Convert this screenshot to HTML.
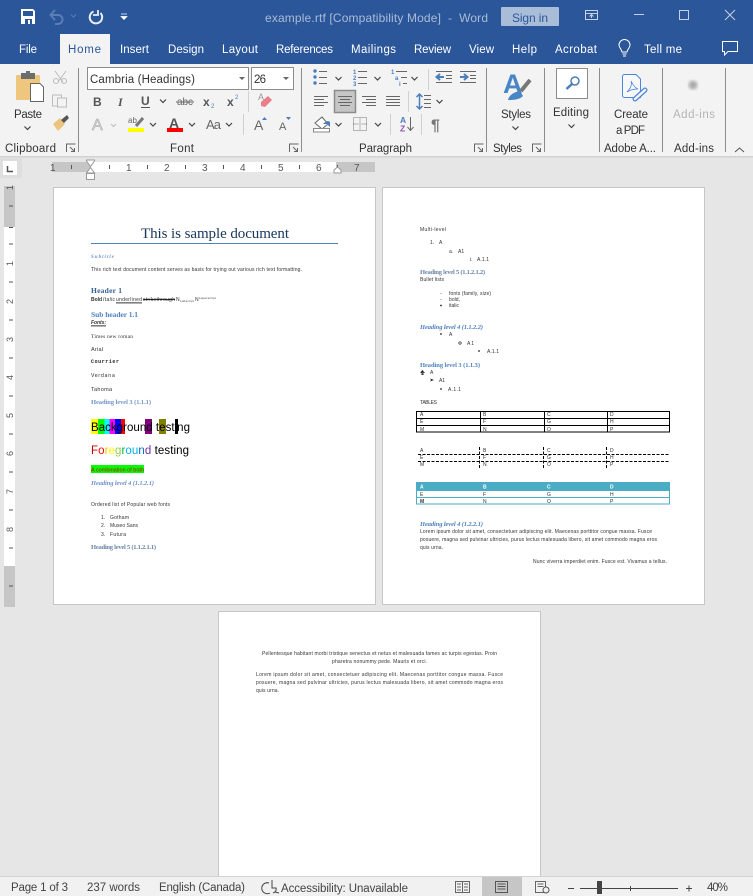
<!DOCTYPE html>
<html lang="en"><head><meta charset="utf-8"><title>example.rtf - Word</title>
<style>
html,body{margin:0;padding:0;width:753px;height:896px;overflow:hidden;background:#e6e6e6}
svg{display:block}
text{font-family:"Liberation Sans",sans-serif;white-space:pre}
.r{font-size:11.5px;fill:#333}
.w{font-size:11.5px;fill:#fff}
.d{font-size:5px;fill:#333}
.h{font-family:"Liberation Serif",serif !important;font-weight:bold;font-size:6.5px;fill:#4f81bd}
.n{font-size:10px;fill:#555}
.s{font-size:11.5px;fill:#444}
.ln{stroke:#666;stroke-width:1;fill:none}
.b{stroke:#4a7ebb;stroke-width:1;fill:none}
</style></head><body>
<svg width="753" height="896" viewBox="0 0 753 896" xmlns="http://www.w3.org/2000/svg">
<defs><filter id="bl"><feGaussianBlur stdDeviation="1.5"/></filter>
<g id="chev"><path d="M-3 -1.5L0 1.5L3 -1.5" fill="none" stroke="#444" stroke-width="1.200"/></g>
<g id="launch"><path d="M-4.5 4V-4H4.5M-1 -1L3.5 3.5M3.5 0V3.5H0" fill="none" stroke="#666" stroke-width="1"/></g>
</defs>
<!-- Title bar and tabs -->
<rect width="753" height="64" fill="#2b579a"/>
<path d="M21 9H33L35 11V24H21Z" fill="#fff"/><rect x="23" y="11" width="10" height="5" fill="#2b579a"/><rect x="25" y="19" width="7" height="5" fill="#2b579a"/><rect x="28" y="20" width="2" height="4" fill="#fff"/>
<path d="M55 10L50.500 15L55 20M51 15H58A4.500 4.500 0 0 1 58 24H55" fill="none" stroke="#5b7eb3" stroke-width="2"/>
<path d="M71 14.500l2.500 2.500 2.500-2.500" fill="none" stroke="#5b7eb3"/>
<path d="M93.500 11.500A6.200 6.200 0 1 0 100.500 13" fill="none" stroke="#e9eef6" stroke-width="2"/><path d="M98 10V15H93" fill="none" stroke="#e9eef6" stroke-width="1.800"/>
<path d="M121 14h6M121 16.500h6l-3 3z" fill="#fff" stroke="#fff" stroke-width=".7"/>
<text x="265" y="22" font-size="12" fill="#a9bbd6" textLength="223">example.rtf [Compatibility Mode]  -  Word</text>
<rect x="501" y="7" width="58" height="19" rx="1" fill="#aabdd8"/>
<text x="512" y="22" font-size="12" fill="#2b579a" textLength="36">Sign in</text>
<g fill="none" stroke="#c4d0e3"><rect x="585.500" y="10.500" width="12" height="9"/><path d="M585.500 13.500H597.500M591.500 18V15M589.500 16.500L591.500 14.500L593.500 16.500"/>
<path d="M634 14.500H644"/><rect x="679.500" y="10.500" width="9" height="9"/><path d="M725 10L735 20M735 10L725 20"/></g>
<text class="w" x="19" y="53" textLength="18">File</text>
<rect x="60" y="34" width="50" height="30" fill="#f3f3f3"/>
<text x="68" y="53" font-size="11.5" fill="#2b579a" textLength="33">Home</text>
<text class="w" x="120" y="53" textLength="29">Insert</text>
<text class="w" x="168" y="53" textLength="36">Design</text>
<text class="w" x="222" y="53" textLength="36">Layout</text>
<text class="w" x="276" y="53" textLength="57">References</text>
<text class="w" x="351" y="53" textLength="45">Mailings</text>
<text class="w" x="414" y="53" textLength="37">Review</text>
<text class="w" x="469" y="53" textLength="25">View</text>
<text class="w" x="512" y="53" textLength="25">Help</text>
<text class="w" x="555" y="53" textLength="42">Acrobat</text>
<path d="M622 52C621 48 619 48 619 45A5.500 5.500 0 0 1 630 45C630 48 628 48 627 52ZM622.500 54H626.500M623 56H626" fill="none" stroke="#fff"/>
<text class="w" x="644" y="53" textLength="38">Tell me</text>
<path d="M722.500 41.500H737.500V51.500H728L724.500 55V51.500H722.500Z" fill="none" stroke="#fff"/>
<!-- Ribbon -->
<rect y="64" width="753" height="92" fill="#f3f3f3"/>
<rect y="156" width="753" height="1.500" fill="#d2d2d2"/>
<g fill="#8c8c8c"><rect x="78" y="68" width="1" height="84"/><rect x="301" y="68" width="1" height="84"/><rect x="486" y="68" width="1" height="84"/><rect x="544" y="68" width="1" height="84"/><rect x="599" y="68" width="1" height="84"/><rect x="662" y="68" width="1" height="84"/><rect x="725" y="68" width="1" height="84"/></g>
<!-- Clipboard -->
<rect x="16" y="75" width="24" height="25" rx="1" fill="#eec67d"/><rect x="21" y="73" width="14" height="6" fill="#6d6d6d"/><rect x="26" y="71" width="4" height="4" fill="#6d6d6d"/>
<path d="M30.500 83.500H40L43.500 87V101.500H30.500Z" fill="#fff" stroke="#666"/>
<text class="r" x="14" y="118" textLength="28">Paste</text><use href="#chev" x="27.500" y="128"/>
<path d="M55 71L63 82M66 71L58 82" stroke="#bbb" fill="none"/><circle cx="56" cy="81" r="2.500" fill="none" stroke="#bbb"/><circle cx="64" cy="81" r="2.500" fill="none" stroke="#bbb"/>
<rect x="52.500" y="95" width="9" height="11" fill="none" stroke="#bbb"/><rect x="57.500" y="98" width="9" height="9" fill="#f3f3f3" stroke="#bbb"/>
<path d="M53 124L60 118L65 124L58 131Z" fill="#ecc47c"/><path d="M61 120L67 115L69 118L64 123Z" fill="#555"/>
<text class="r" x="5" y="152" textLength="51">Clipboard</text><use href="#launch" x="71" y="148"/>
<!-- Font -->
<rect x="87.500" y="67.500" width="161" height="22" fill="#fff" stroke="#8c8c8c"/><rect x="251.500" y="67.500" width="42" height="22" fill="#fff" stroke="#8c8c8c"/>
<text class="r" x="90" y="83" textLength="105">Cambria (Headings)</text><text class="r" x="254" y="83" textLength="12">26</text>
<path d="M239 77h6l-3 3zM283 77h6l-3 3z" fill="#666"/>
<text x="93" y="106" font-size="12" font-weight="bold" fill="#555">B</text>
<text x="118" y="106" font-size="12" font-style="italic" font-weight="bold" fill="#555" style="font-family:'Liberation Serif',serif">I</text>
<text x="141" y="105" font-size="12" font-weight="bold" fill="#555">U</text><rect x="141" y="107" width="9" height="1" fill="#555"/>
<use href="#chev" x="163" y="101"/>
<text x="177" y="105" font-size="10" fill="#666" textLength="16">abc</text><rect x="176" y="101.500" width="18" height="1" fill="#666"/>
<text x="203" y="106" font-size="12" font-weight="bold" fill="#555">x</text><text x="211" y="108" font-size="6" fill="#4a7ebb">2</text>
<text x="227" y="106" font-size="12" font-weight="bold" fill="#555">x</text><text x="235" y="99" font-size="6" fill="#4a7ebb">2</text>
<rect x="248" y="91" width="1" height="21" fill="#d0d0d0"/>
<path d="M261 102L268 96L272 100L265 107L261 106Z" fill="#e8808a"/><text x="258" y="100" font-size="9" fill="#999">A</text>
<text x="92" y="130" font-size="16" fill="#ddd" stroke="#aaa" stroke-width=".6" textLength="14">A</text><path d="M111 124l2.500 2.500 2.500-2.500" fill="none" stroke="#bbb"/>
<text x="128" y="123" font-size="8" fill="#666">ab</text><path d="M136 126L143 118" stroke="#777" stroke-width="3"/><rect x="128" y="128" width="16" height="4" fill="#ff0"/>
<use href="#chev" x="153" y="124.500"/>
<text x="169" y="128" font-size="14" font-weight="bold" fill="#555">A</text><rect x="167" y="128" width="16" height="4" fill="#f00"/>
<use href="#chev" x="192" y="124.500"/>
<text x="206" y="129" font-size="13" fill="#666" textLength="15">Aa</text><use href="#chev" x="229" y="124.500"/>
<rect x="243" y="114" width="1" height="21" fill="#d0d0d0"/>
<text x="254" y="130" font-size="14" fill="#666">A</text><path d="M262 120h5l-2.500-3z" fill="#4a7ebb"/>
<text x="279" y="130" font-size="11" fill="#666">A</text><path d="M286 117h5l-2.500 3z" fill="#4a7ebb"/>
<text class="r" x="170" y="152" textLength="24">Font</text><use href="#launch" x="294" y="148"/>
<!-- Paragraph -->
<g fill="#4a7ebb"><circle cx="315" cy="71" r="1.700"/><circle cx="315" cy="77" r="1.700"/><circle cx="315" cy="83" r="1.700"/></g>
<path class="ln" d="M319 71.500H327M319 77.500H327M319 83.500H327"/><use href="#chev" x="338.500" y="78.500"/>
<g font-weight="bold"><text x="353" y="74" font-size="6" fill="#4a7ebb">1</text><text x="353" y="80" font-size="6" fill="#4a7ebb">2</text><text x="353" y="86" font-size="6" fill="#4a7ebb">3</text></g>
<path class="ln" d="M358 71.500H367M358 77.500H367M358 83.500H367"/><use href="#chev" x="377.500" y="78.500"/>
<g font-weight="bold"><text x="391" y="74" font-size="6" fill="#4a7ebb">1</text><text x="395" y="80" font-size="6" fill="#4a7ebb">a</text><text x="399" y="86" font-size="6" fill="#4a7ebb">i</text></g>
<path class="ln" d="M396 71.500H407M401 77.500H407M403 83.500H407"/><use href="#chev" x="414.500" y="78.500"/>
<rect x="428" y="69" width="1" height="21" fill="#d0d0d0"/>
<path class="ln" d="M436 71.500H452M446 75.500H452M446 78.500H452M436 82.500H452"/><path d="M436 77H444M440 74L436.500 77L440 80" stroke="#4a7ebb" stroke-width="2" fill="none"/>
<path class="ln" d="M460 71.500H476M470 75.500H476M470 78.500H476M460 82.500H476"/><path d="M460 77H467M464 74L467.500 77L464 80" stroke="#4a7ebb" stroke-width="2" fill="none"/>
<path class="ln" d="M314 96.500H328M314 99.500H324M314 102.500H328M314 105.500H324"/>
<rect x="334.500" y="90.500" width="21" height="22" fill="#c6c6c6" stroke="#8c8c8c" stroke-width="1.500"/>
<path class="ln" d="M338 96.500H352M340 99.500H350M338 102.500H352M340 105.500H350"/>
<path class="ln" d="M362 96.500H376M366 99.500H376M362 102.500H376M366 105.500H376"/>
<path class="ln" d="M386 96.500H400M386 99.500H400M386 102.500H400M386 105.500H400"/>
<rect x="408" y="91" width="1" height="21" fill="#d0d0d0"/>
<path class="ln" d="M424 95.500H431M424 99.500H431M424 103.500H431M424 107.500H431"/><path d="M419.500 94V109M416.500 97L419.500 94L422.500 97M416.500 106L419.500 109L422.500 106" stroke="#4a7ebb" stroke-width="1.500" fill="none"/><use href="#chev" x="439.500" y="101.500"/>
<path d="M315 123L322 117L328 124L322 129Z" fill="#fff" stroke="#666"/><path d="M323 124C327 120 329 121 330 122V127L327 124Z" fill="#4a7ebb"/><rect x="313.500" y="128.500" width="16" height="3.500" fill="#fff" stroke="#888"/><use href="#chev" x="338.500" y="124.500"/>
<rect x="353.500" y="117.500" width="13" height="13" fill="none" stroke="#777" stroke-dasharray="1 1"/><path d="M353.500 124H366.500M360 117.500V130.500" stroke="#777" stroke-dasharray="1 1"/><use href="#chev" x="378" y="124.500"/>
<rect x="390" y="114" width="1" height="21" fill="#d0d0d0"/>
<text x="400" y="123" font-size="8.500" font-weight="bold" fill="#4a7ebb">A</text><text x="400" y="131.500" font-size="8.500" font-weight="bold" fill="#8e4fb5">Z</text><path d="M410.500 117V130M407.500 127L410.500 130.500L413.500 127" class="ln"/>
<rect x="421" y="114" width="1" height="21" fill="#d0d0d0"/>
<text x="431" y="130.500" font-size="16" font-weight="bold" fill="#777">¶</text>
<text class="r" x="359" y="152" textLength="53">Paragraph</text><use href="#launch" x="479" y="148"/>
<!-- Styles -->
<text x="503" y="93" font-size="27" font-weight="bold" fill="#4a86c5" textLength="19">A</text>
<path d="M521 91L530 80" stroke="#777" stroke-width="4"/><path d="M508 100C509 95 514 92 520 91L523 96C519 100 513 100 508 100Z" fill="#4a86c5"/>
<text class="r" x="501" y="118" textLength="30">Styles</text><use href="#chev" x="515.500" y="128"/>
<text class="r" x="493" y="152" textLength="29">Styles</text><use href="#launch" x="537" y="148"/>
<!-- Editing -->
<rect x="556.500" y="68.500" width="31" height="30" fill="#fff" stroke="#8c8c8c"/>
<circle cx="575" cy="81" r="4" fill="none" stroke="#4a7ebb" stroke-width="1.500"/><path d="M572 84L566.500 89" stroke="#4a7ebb" stroke-width="2.500"/>
<text class="r" x="553" y="116" textLength="36">Editing</text><use href="#chev" x="571.500" y="126"/>
<!-- PDF -->
<path d="M624.500 74.500H636L640.500 79V97.500H624.500A2 2 0 0 1 622.500 95.500V76.500A2 2 0 0 1 624.500 74.500Z" fill="#f8f8f8" stroke="#4a86e0"/>
<path d="M627 92C631 88 632 84 631 81C633 85 635 88 638 89C634 89 630 90 627 92Z" fill="none" stroke="#4a86e0" stroke-width=".8"/>
<path d="M635 99L645 90" stroke="#4a86e0" stroke-width="5" stroke-linecap="round" fill="none"/><path d="M635 99L645 90" stroke="#f3f3f3" stroke-width="2.500" stroke-linecap="round" fill="none"/>
<text class="r" x="614" y="118" textLength="34">Create</text><text class="r" x="616" y="134" textLength="29">a PDF</text>
<text class="r" x="604" y="152" textLength="52">Adobe A...</text>
<!-- Add-ins -->
<circle cx="693" cy="85" r="4.500" fill="#aaa" filter="url(#bl)"/>
<text x="673" y="118" font-size="11.500" fill="#b5b5b5" textLength="42">Add-ins</text>
<text class="r" x="674" y="152" textLength="40">Add-ins</text>
<path d="M735 152L739.500 148L744 152" fill="none" stroke="#555"/>
<!-- Horizontal ruler -->
<rect x="0" y="157" width="22" height="21" fill="#dedede"/><rect x="3" y="161" width="14" height="14" fill="#fff"/>
<path d="M7.500 166V171.500H13" fill="none" stroke="#555" stroke-width="1.500"/>
<rect x="52" y="162" width="38" height="10" fill="#c6c6c6"/><rect x="90" y="162" width="246" height="10" fill="#fff"/><rect x="336" y="162" width="39" height="10" fill="#c6c6c6"/>
<text class="n" x="50" y="171">1</text><text class="n" x="126" y="171">1</text><text class="n" x="164" y="171">2</text><text class="n" x="202" y="171">3</text><text class="n" x="240" y="171">4</text><text class="n" x="278" y="171">5</text><text class="n" x="316" y="171">6</text><text class="n" x="354" y="171">7</text>
<path d="M71.500 165V169M109.500 165V169M147.500 165V169M185.500 165V169M223.500 165V169M261.500 165V169M299.500 165V169M337.500 165V169" stroke="#555"/>
<path d="M86.500 160H94.500V161L90.500 166.500L86.500 161ZM86.500 173L90.500 167.500L94.500 173ZM86.500 173.500H94.500V179.500H86.500Z" fill="#fff" stroke="#999"/>
<path d="M334 173V170L337.500 167L341 170V173Z" fill="#fff" stroke="#999"/>
<!-- Vertical ruler -->
<rect x="4" y="186" width="11" height="41" fill="#c6c6c6"/><rect x="4" y="227" width="11" height="339" fill="#fff"/><rect x="4" y="566" width="11" height="41" fill="#c6c6c6"/>
<path d="M9 206H13M9 244H13M9 282H13M9 320H13M9 358H13M9 396H13M9 434H13M9 472H13M9 510H13M9 548H13M9 586H13" stroke="#555"/>
<text transform="translate(13,190) rotate(-90)" font-size="9" fill="#555">1</text><text transform="translate(13,266) rotate(-90)" font-size="9" fill="#555">1</text><text transform="translate(13,304) rotate(-90)" font-size="9" fill="#555">2</text><text transform="translate(13,342) rotate(-90)" font-size="9" fill="#555">3</text><text transform="translate(13,380) rotate(-90)" font-size="9" fill="#555">4</text><text transform="translate(13,418) rotate(-90)" font-size="9" fill="#555">5</text><text transform="translate(13,456) rotate(-90)" font-size="9" fill="#555">6</text><text transform="translate(13,494) rotate(-90)" font-size="9" fill="#555">7</text><text transform="translate(13,532) rotate(-90)" font-size="9" fill="#555">8</text>
<path d="M9 227.500H13" stroke="#555"/>
<!-- Pages -->
<rect x="53.500" y="187.500" width="322" height="417" fill="#fff" stroke="#c6c6c6"/>
<rect x="382.500" y="187.500" width="322" height="417" fill="#fff" stroke="#c6c6c6"/>
<rect x="218.500" y="611.500" width="322" height="280" fill="#fff" stroke="#c6c6c6"/>
<!-- Page 1 -->
<text x="141" y="238" font-size="15" fill="#17365d" textLength="148" style="font-family:'Liberation Serif',serif">This is sample document</text>
<rect x="91" y="243" width="247" height="1" fill="#4f81bd"/>
<text x="91" y="258" font-size="5" font-style="italic" fill="#6f93c9" textLength="23" style="font-family:'Liberation Serif',serif;font-weight:bold">Subtitle</text>
<text class="d" x="91" y="271" textLength="211">This rich text document content serves as basis for trying out various rich text formatting.</text>
<text class="h" x="91" y="293" textLength="31" style="font-size:7.500px;fill:#365f91">Header 1</text>
<text class="d" x="91" y="301" font-weight="bold" textLength="11">Bold</text><text class="d" x="103" y="301" font-style="italic" textLength="12">Italic</text>
<text class="d" x="116" y="301" textLength="26">underlined</text><rect x="116" y="302.500" width="26" height=".8" fill="#000"/>
<text class="d" x="143" y="301" textLength="32">strikethrough</text><rect x="143" y="299" width="32" height=".8" fill="#000"/>
<text class="d" x="176" y="301">N</text><text x="180" y="302" font-size="3" fill="#333" textLength="14">subscript</text>
<text class="d" x="195" y="301">N</text><text x="199" y="299" font-size="3" fill="#333" textLength="17">superscript</text>
<text class="h" x="91" y="317" textLength="47" style="font-size:7.500px">Sub header 1.1</text>
<text class="d" x="91" y="324" font-weight="bold" font-style="italic" textLength="15">Fonts:</text><rect x="91" y="325.500" width="15" height=".8" fill="#000"/>
<text x="91" y="338" font-size="5.500" fill="#333" textLength="42" style="font-family:'Liberation Serif',serif">Times new roman</text>
<text x="91" y="351" font-size="5.500" fill="#333" textLength="12">Arial</text>
<text x="91" y="363" font-size="5" font-weight="bold" fill="#222" textLength="28" style="font-family:'Liberation Mono',monospace">Courrier</text>
<text x="91" y="377" font-size="5" fill="#333" textLength="24" style="font-family:'DejaVu Sans',sans-serif">Verdana</text>
<text x="91" y="391" font-size="5.500" fill="#333" textLength="21">Tahoma</text>
<text class="h" x="91" y="404" textLength="60" style="fill:#6f93c9">Heading level 3 (1.1.1)</text>
<rect x="91" y="419" width="7" height="15" fill="#ff0"/><rect x="98" y="419" width="6.500" height="15" fill="#0f0"/><rect x="104.500" y="419" width="5" height="15" fill="#0ff"/><rect x="109.500" y="419" width="5.500" height="15" fill="#f0f"/><rect x="115" y="419" width="6" height="15" fill="#00f"/><rect x="121" y="419" width="4" height="15" fill="#f00"/><rect x="145" y="419" width="7" height="15" fill="#800080"/><rect x="159" y="419" width="7" height="15" fill="#808000"/><rect x="175" y="419" width="3" height="15" fill="#000"/>
<text x="91" y="431" font-size="11.500" fill="#000" textLength="99">Background testing</text>
<text x="91" y="454" font-size="11.500" textLength="98"><tspan fill="#c00000">F</tspan><tspan fill="#f00">o</tspan><tspan fill="#ffc000">r</tspan><tspan fill="#ff0">e</tspan><tspan fill="#92d050">g</tspan><tspan fill="#00b050">r</tspan><tspan fill="#00b0f0">o</tspan><tspan fill="#00b0f0">u</tspan><tspan fill="#0070c0">n</tspan><tspan fill="#7030a0">d</tspan><tspan fill="#000"> testing</tspan></text>
<rect x="91" y="465" width="53" height="8" fill="#0f0"/><text x="91" y="471.500" font-size="5.500" fill="#c00" textLength="53">A combination of both</text>
<text class="h" x="91" y="485" font-style="italic" textLength="63" style="fill:#6f93c9">Heading level 4 (1.1.2.1)</text>
<text class="d" x="91" y="506" textLength="79">Ordered list of Popular web fonts</text>
<text class="d" x="101" y="519">1.</text><text class="d" x="110" y="519" textLength="19">Gotham</text>
<text class="d" x="101" y="527">2.</text><text class="d" x="110" y="527" textLength="28">Museo Sans</text>
<text class="d" x="101" y="536">3.</text><text class="d" x="110" y="536" textLength="16">Futura</text>
<text class="h" x="91" y="549" textLength="65" style="fill:#6b83a8">Heading level 5 (1.1.2.1.1)</text>
<!-- Page 2 -->
<text class="d" x="420" y="231" textLength="26">Multi-level</text>
<text class="d" x="430" y="244">1.</text><text class="d" x="439" y="244">A</text>
<text class="d" x="449" y="253">a.</text><text class="d" x="458" y="253">A1</text>
<text class="d" x="470" y="261">i.</text><text class="d" x="477" y="261" textLength="12">A.1.1</text>
<text class="h" x="420" y="274" textLength="65" style="fill:#6b83a8">Heading level 5 (1.1.2.1.2)</text>
<text class="d" x="420" y="281" textLength="24">Bullet lists</text>
<text class="d" x="440" y="295">-</text><text class="d" x="449" y="295" textLength="42">fonts (family, size)</text>
<text class="d" x="440" y="301">-</text><text class="d" x="449" y="301" textLength="11">bold,</text>
<circle cx="441" cy="305.500" r=".9" fill="#222"/><text class="d" x="449" y="307" textLength="10">italic</text>
<text class="h" x="420" y="329" font-style="italic" textLength="63">Heading level 4 (1.1.2.2)</text>
<circle cx="441" cy="334" r=".9" fill="#222"/><text class="d" x="449" y="336">A</text>
<circle cx="460" cy="343" r="1.200" fill="none" stroke="#222" stroke-width=".7"/><text class="d" x="467" y="345" textLength="7">A1</text>
<circle cx="479" cy="351" r=".9" fill="#222"/><text class="d" x="487" y="353" textLength="12">A.1.1</text>
<text class="h" x="420" y="367" textLength="60">Heading level 3 (1.1.3)</text>
<path d="M422.500 370L424 371.500L422.500 373L421 371.500ZM420 372.500L422 371.500L422 373.500ZM425 372.500L423 371.500L423 373.500ZM422.500 373L424 374.500L422.500 375L421 374.500Z" fill="#222"/><text class="d" x="430" y="374">A</text>
<path d="M430 378.500L434 380L430 381.500L431 380Z" fill="#222"/><text class="d" x="439" y="382" textLength="6">A1</text>
<circle cx="441" cy="389" r=".9" fill="#222"/><text class="d" x="448" y="391" textLength="13">A.1.1</text>
<text class="d" x="420" y="404" textLength="17">TABLES</text>
<g fill="none" stroke="#000"><rect x="416.500" y="411.500" width="253" height="20.500"/><path d="M416.500 418.500H669.500M416.500 425.500H669.500M480.500 411.500V432M544.500 411.500V432M607.500 411.500V432"/></g>
<text class="d" x="420" y="416">A</text><text class="d" x="483" y="416">B</text><text class="d" x="547" y="416">C</text><text class="d" x="610" y="416">D</text><text class="d" x="420" y="423">E</text><text class="d" x="483" y="423">F</text><text class="d" x="547" y="423">G</text><text class="d" x="610" y="423">H</text><text class="d" x="420" y="431">M</text><text class="d" x="483" y="431">N</text><text class="d" x="547" y="431">O</text><text class="d" x="610" y="431">P</text>
<text class="d" x="420" y="452">A</text><text class="d" x="483" y="452">B</text><text class="d" x="547" y="452">C</text><text class="d" x="610" y="452">D</text><text class="d" x="420" y="459">E</text><text class="d" x="483" y="459">F</text><text class="d" x="547" y="459">G</text><text class="d" x="610" y="459">H</text><text class="d" x="420" y="466">M</text><text class="d" x="483" y="466">N</text><text class="d" x="547" y="466">O</text><text class="d" x="610" y="466">P</text>
<path d="M418 454.500H670M418 461.500H670M479.500 447V469M543.500 447V469M606.500 447V469" stroke="#000" stroke-dasharray="3 1.500" fill="none"/>
<rect x="416" y="482" width="254" height="9" fill="#4bacc6"/>
<rect x="416.500" y="482.500" width="253" height="21.500" fill="none" stroke="#4bacc6"/><path d="M416.500 497.500H669.500" stroke="#4bacc6"/>
<text x="420" y="488.500" font-size="5" font-weight="bold" fill="#fff">A</text><text x="483" y="488.500" font-size="5" font-weight="bold" fill="#fff">B</text><text x="547" y="488.500" font-size="5" font-weight="bold" fill="#fff">C</text><text x="610" y="488.500" font-size="5" font-weight="bold" fill="#fff">D</text>
<text class="d" x="420" y="496">E</text><text class="d" x="483" y="496">F</text><text class="d" x="547" y="496">G</text><text class="d" x="610" y="496">H</text>
<text class="d" x="420" y="503" font-weight="bold">M</text><text class="d" x="483" y="503">N</text><text class="d" x="547" y="503">O</text><text class="d" x="610" y="503">P</text>
<text class="h" x="420" y="526" font-style="italic" textLength="63">Heading level 4 (1.2.2.1)</text>
<text class="d" x="420" y="533" textLength="232">Lorem ipsum dolor sit amet, consectetuer adipiscing elit. Maecenas porttitor congue massa. Fusce</text>
<text class="d" x="420" y="541" textLength="237">posuere, magna sed pulvinar ultricies, purus lectus malesuada libero, sit amet commodo magna eros</text>
<text class="d" x="420" y="549" textLength="23">quis urna.</text>
<text class="d" x="533" y="563" textLength="134">Nunc viverra imperdiet enim. Fusce est. Vivamus a tellus.</text>
<!-- Page 3 -->
<text class="d" x="262" y="655" textLength="235">Pellentesque habitant morbi tristique senectus et netus et malesuada fames ac turpis egestas. Proin</text>
<text class="d" x="332" y="663" textLength="95">pharetra nonummy pede. Mauris et orci.</text>
<text class="d" x="256" y="676" textLength="247">Lorem ipsum dolor sit amet, consectetuer adipiscing elit. Maecenas porttitor congue massa. Fusce</text>
<text class="d" x="256" y="684" textLength="247">posuere, magna sed pulvinar ultricies, purus lectus malesuada libero, sit amet commodo magna eros</text>
<text class="d" x="256" y="692" textLength="23">quis urna.</text>
<!-- Status bar -->
<rect y="876" width="753" height="20" fill="#f1f1f1"/><rect y="876" width="753" height="1" fill="#d2d2d2"/>
<text class="s" x="11" y="891" textLength="57">Page 1 of 3</text>
<text class="s" x="87" y="891" textLength="53">237 words</text>
<text class="s" x="159" y="891" textLength="86">English (Canada)</text>
<path d="M269 883A5.500 5.500 0 1 0 270 893M272 880V888H276A4 4 0 0 1 273 893M275 892L279 893" fill="none" stroke="#444"/>
<text class="s" x="281" y="892" textLength="127">Accessibility: Unavailable</text>
<path d="M455.500 881.500H469.500V892.500H455.500ZM462.500 881.500V892.500M457 884H461M457 887H461M457 890H461M464 884H468M464 887H468M464 890H468" fill="none" stroke="#666"/>
<rect x="482" y="877" width="40" height="19" fill="#c6c6c6"/>
<path d="M495.500 881.500H507.500V892.500H495.500ZM497.500 884H505.500M497.500 886.500H505.500M497.500 889H505.500" fill="none" stroke="#555"/>
<path d="M535.500 881.500H545.500V892.500H535.500ZM537.500 884H543.500M537.500 886.500H543.500" fill="none" stroke="#666"/><circle cx="546" cy="890" r="3" fill="#f1f1f1" stroke="#555"/>
<path d="M568 888.500H574M580 888.500H678M630.500 886V891M686 888.500H692M689 885.500V891.500" stroke="#444" fill="none"/>
<rect x="597" y="881" width="5" height="13" fill="#444"/>
<text class="s" x="707" y="891" textLength="21">40%</text>
</svg>
</body></html>
